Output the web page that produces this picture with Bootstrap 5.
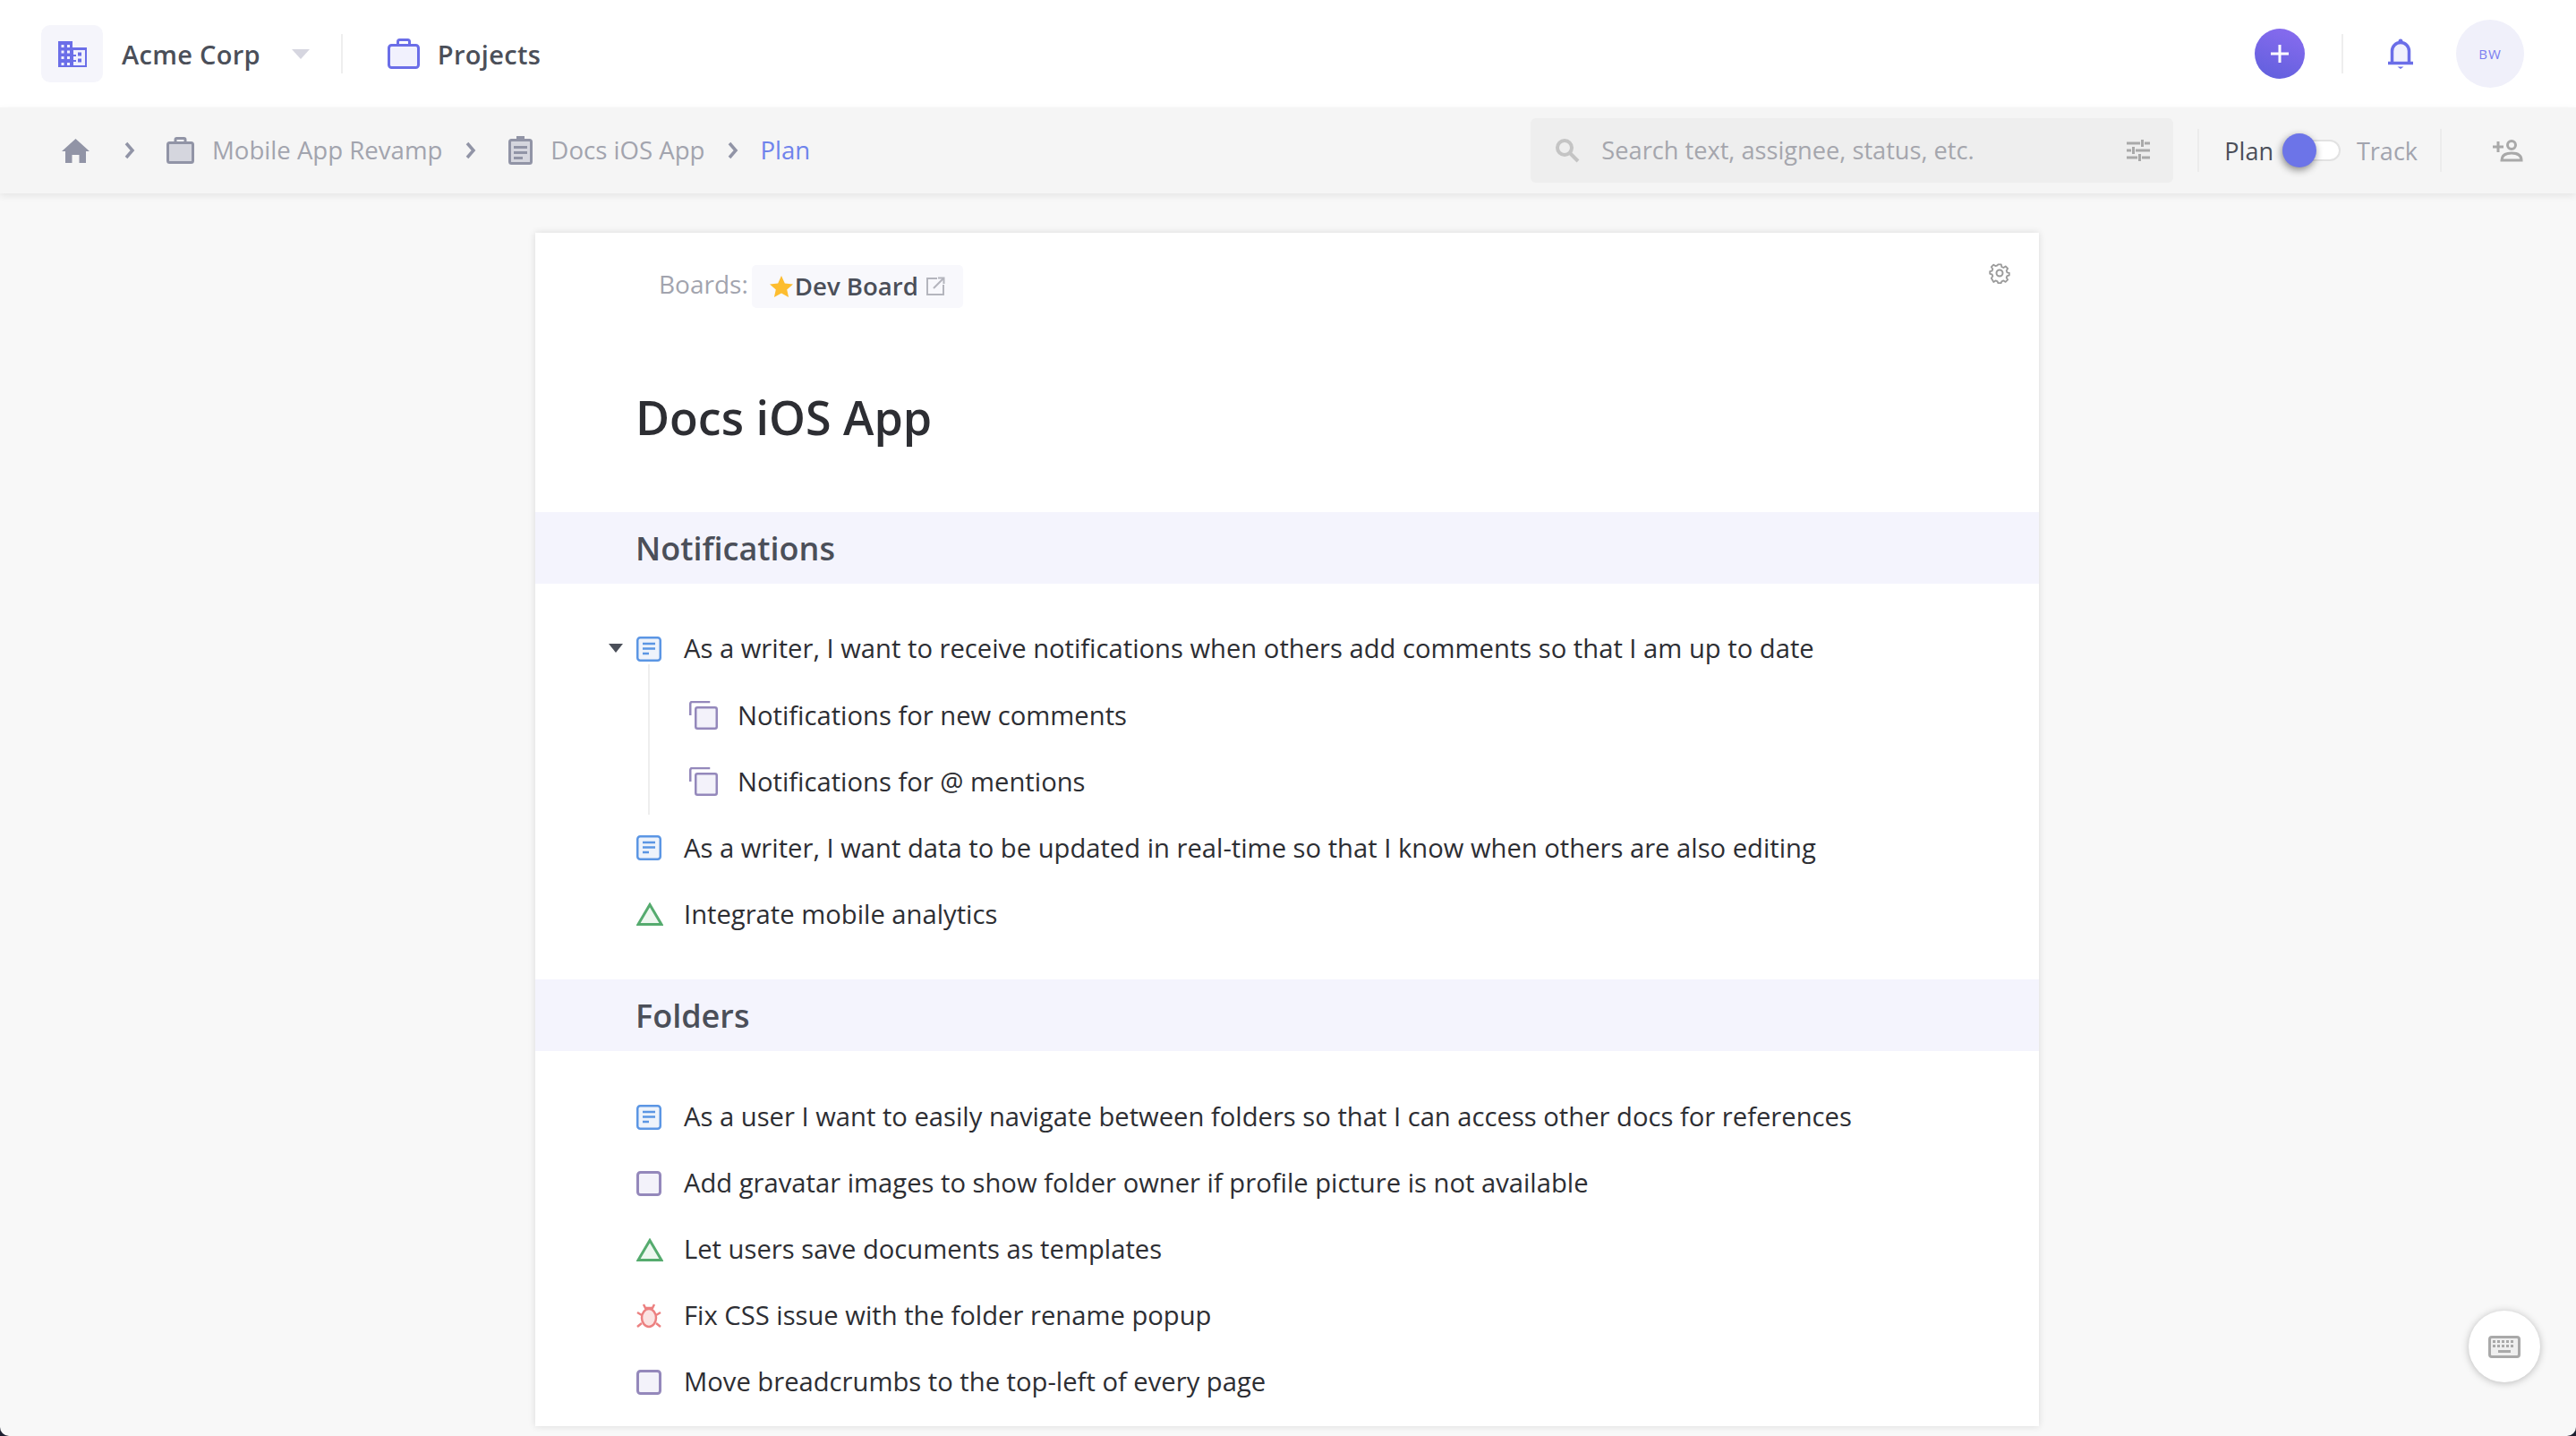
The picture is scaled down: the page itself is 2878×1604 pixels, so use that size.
<!DOCTYPE html>
<html lang="en">
<head>
    <meta charset="UTF-8">
    <meta name="viewport" content="width=device-width, initial-scale=1.0">
    <title>Docs iOS App</title>
    <link href="https://cdn.jsdelivr.net/npm/bootstrap@5.3.0/dist/css/bootstrap.min.css" rel="stylesheet">
    <style>
        html { height: 100%; background: #1d2030; }
        body { height: 100%; font-family: "Open Sans", "Noto Sans", sans-serif; background: #f8f8f8; color: #2d2e33; overflow: hidden; border-radius: 0 0 10px 10px; }

        /* top bar */
        .top-bar { height: 120px; padding-left: 46px; padding-right: 58px; background: #fff; }
        .org-logo { width: 69px; height: 64px; border-radius: 10px; background: #f5f5fb; margin-right: 21px; }
        .org-name, .top-link { font-size: 29px; font-weight: 600; color: #4b4f59; letter-spacing: .3px; line-height: 1; }
        .org-caret { width: 0; height: 0; margin-left: 35px; border-left: 10px solid transparent; border-right: 10px solid transparent; border-top: 11px solid #d6d6e0; }
        .bar-sep { width: 2px; height: 44px; background: #eeeeee; }
        .org-caret + .bar-sep { margin-left: 35px; margin-right: 50px; }
        .top-link { margin-left: 20px; }
        .add-btn { width: 56px; height: 56px; padding: 0; background: linear-gradient(20deg, #5f5fdc, #8a6cf0); border: 0; }
        .add-btn + .bar-sep { margin-left: 41px; margin-right: 49px; }
        .user-pic { width: 76px; height: 76px; margin-left: 47px; background: #f0f0fa; color: #7b7ef0; font-size: 15px; letter-spacing: 1px; }

        /* breadcrumb bar */
        .crumb-bar { height: 96px; padding-left: 69px; padding-right: 58px; background: #f5f5f5; box-shadow: 0 3px 8px rgba(0, 0, 0, .08); position: relative; }
        .crumb-text { font-size: 27.6px; color: #a2a4ae; line-height: 1; margin-left: 20px; }
        .crumb-text.now { color: #6f83ec; margin-left: 0; }
        .crumb-sep { margin: 0 36px 0 26px; flex: none; }
        .crumb-sep.first { margin-left: 39px; margin-right: 35px; }
        .crumb-sep.last { margin-right: 24px; }
        .search-box { width: 718px; height: 72px; margin-left: auto; padding: 0 26px 0 27px; border-radius: 6px; background: #eeeeee; }
        .search-input { border: 0; background: transparent; padding: 0; margin-left: 24px; font-size: 27.2px; color: #a5a6ad; box-shadow: none !important; }
        .search-input::placeholder { color: #a5a6ad; opacity: 1; }
        .crumb-rule { width: 2px; height: 48px; background: #ececec; flex: none; }
        .search-box + .crumb-rule { margin: 0 28px 0 27px; }
        .plan-label { font-size: 27px; color: #4b4f59; line-height: 1; }
        .plan-label.off { color: #a2a4ae; }
        .plan-label.off + .crumb-rule { margin: 0 56px 0 25px; }
        .plan-toggle { width: 65px; height: 24px; border-radius: 12px; background: #fff; border: 2px solid #e2e2e2; position: relative; margin: 0 18px 0 10px; }
        .plan-knob { position: absolute; left: -2px; top: -9px; width: 38px; height: 38px; border-radius: 50%; background: #6c74e8; box-shadow: -1px 3px 8px rgba(0, 0, 0, .45); }

        /* page sheet */
        .page-sheet { width: 1680px; height: 1333px; margin: 44px 0 0 598px; background: #fff; border: 0; border-radius: 0; box-shadow: 0 0 8px rgba(0, 0, 0, .12); position: relative; }
        .page-sheet > * { flex-shrink: 0; }
        .gear-btn { position: absolute; right: 32px; top: 33px; line-height: 0; }
        .boards-row { height: 48px; margin-top: 36px; padding-left: 138px; }
        .boards-label { font-size: 28px; color: #a2a4ae; margin-right: 4px; position: relative; top: -3px; }
        .board-pill { height: 48px; padding: 0 20px 0 20px; border-radius: 5px; background: #f8f8fc; color: #4b4f59; font-size: 27.6px; font-weight: 600; }
        .pill-star { margin-right: 2px; }
        .pill-link { margin-left: 8px; }
        .doc-title { margin: 86px 0 0 112px; height: 142px; font-size: 52px; font-weight: 600; line-height: 72px; color: #2d2e33; }
        .sect-band { height: 80px; padding: 2px 0 0 112px; background: #f4f4fd; font-size: 36px; font-weight: 600; color: #4b4f59; line-height: 1; }
        .item-list { padding: 36px 0; margin: 0; list-style: none; }
        .item-row { height: 74.1px; padding-left: 113px; font-size: 29.2px; position: relative; line-height: 1; }
        .item-row.sub { padding-left: 172px; }
        .item-icon { width: 32px; margin-right: 21px; flex: none; line-height: 0; }
        .sub .item-icon { width: 34px; margin-right: 20px; }
        .tree-caret { position: absolute; left: 82px; top: 31px; width: 0; height: 0; border-left: 8px solid transparent; border-right: 8px solid transparent; border-top: 10px solid #4b4f59; }
        .tree-line { position: absolute; left: 126px; top: 54px; width: 2px; height: 168px; background: #eeeeee; }

        /* keyboard shortcut button */
        .keys-btn { position: fixed; right: 40px; bottom: 60px; width: 80px; height: 80px; padding: 0; border: 0; background: #fff; box-shadow: 0 1px 8px rgba(0, 0, 0, .25); }
    </style>
</head>
<body>

<header class="top-bar d-flex align-items-center">
    <div class="org-logo d-flex align-items-center justify-content-center">
        <svg width="32" height="29" viewBox="0 0 32 29"><path fill="#6b6ee8" d="M0 0h16v7h16v22H0z"/><path fill="#f1f1fd" d="M3.500 4h3v3h-3zM10 4h3v3h-3zM3.500 10.500h3v3h-3zM10 10.500h3v3h-3zM3.500 17h3v3h-3zM10 17h3v3h-3zM3.500 24h3v3h-3zM10 24h3v3h-3zM17 10h13v17H17z"/><path fill="#6b6ee8" d="M22 12.500h4v4h-4zM22 19.500h4v4h-4zM17 15h3v2h-3zM17 21h3v2h-3z"/></svg>
    </div>
    <span class="org-name">Acme Corp</span>
    <span class="org-caret"></span>
    <span class="bar-sep"></span>
    <svg width="36" height="34" viewBox="0 0 36 34"><rect x="1.500" y="7.500" width="33" height="25" rx="3" fill="#f1f1fd" stroke="#6b6ee8" stroke-width="3"/><path fill="none" stroke="#6b6ee8" stroke-width="3" d="M11.500 7V3.500a2 2 0 0 1 2-2h9a2 2 0 0 1 2 2V7"/></svg>
    <span class="top-link">Projects</span>
    <button class="add-btn btn rounded-circle ms-auto d-flex align-items-center justify-content-center" type="button" aria-label="Add">
        <svg width="24" height="24" viewBox="0 0 24 24"><path fill="none" stroke="#fff" stroke-width="3" d="M12 2v20M2 12h20"/></svg>
    </button>
    <span class="bar-sep"></span>
    <svg width="30" height="34" viewBox="0 0 30 34"><circle cx="15" cy="3" r="2.500" fill="#6b6ee8"/><path fill="#f1f1fd" stroke="#6b6ee8" stroke-width="3.500" d="M5.500 27V14a9.500 9.500 0 0 1 19 0v13"/><path stroke="#6b6ee8" stroke-width="3.500" d="M1 27.500h28"/><path fill="#6b6ee8" d="M11.500 31.500h7L15 34z"/></svg>
    <span class="user-pic rounded-circle d-flex align-items-center justify-content-center">BW</span>
</header>

<nav class="crumb-bar d-flex align-items-center">
    <svg width="31" height="27" viewBox="0 0 31 27"><path fill="#9194a6" d="M15.500 0L31 14h-4v13h-7.500v-9h-8v9H4V14H0z"/></svg>
    <svg class="crumb-sep first" width="12" height="20" viewBox="0 0 12 20"><path fill="none" stroke="#9194a6" stroke-width="3.500" d="M2 2l7 8-7 8"/></svg>
    <svg width="31" height="30" viewBox="0 0 31 30"><rect x="1.500" y="6.500" width="28" height="22" rx="2" fill="#d5d6de" stroke="#9194a6" stroke-width="3"/><path fill="none" stroke="#9194a6" stroke-width="3" d="M10 6V3a1.500 1.500 0 0 1 1.500-1.500h8A1.500 1.500 0 0 1 21 3v3"/></svg>
    <span class="crumb-text">Mobile App Revamp</span>
    <svg class="crumb-sep" width="12" height="20" viewBox="0 0 12 20"><path fill="none" stroke="#9194a6" stroke-width="3.500" d="M2 2l7 8-7 8"/></svg>
    <svg width="27" height="32" viewBox="0 0 27 32"><rect x="1.500" y="4.500" width="24" height="26" rx="2" fill="#d5d6de" stroke="#9194a6" stroke-width="3"/><path fill="#9194a6" d="M9 0h9v6H9zM6 11h15v3H6zM6 17h15v3H6zM6 23h10v3H6z"/></svg>
    <span class="crumb-text">Docs iOS App</span>
    <svg class="crumb-sep last" width="12" height="20" viewBox="0 0 12 20"><path fill="none" stroke="#9194a6" stroke-width="3.500" d="M2 2l7 8-7 8"/></svg>
    <span class="crumb-text now">Plan</span>

    <div class="search-box d-flex align-items-center">
        <svg class="flex-shrink-0" width="28" height="28" viewBox="0 0 28 28"><circle cx="11" cy="11" r="8" fill="none" stroke="#c4c4c4" stroke-width="4"/><path stroke="#c4c4c4" stroke-width="4" d="M17 17l9 9"/></svg>
        <input class="search-input form-control" type="text" placeholder="Search text, assignee, status, etc.">
        <svg class="flex-shrink-0" width="26" height="24" viewBox="0 0 26 24"><path fill="none" stroke="#a9a9a9" stroke-width="3" d="M0 4h15M20 4h6M17.500 0v8M0 12h5M10 12h16M7.500 8v8M0 20h12M17 20h9M14.500 16v8"/></svg>
    </div>
    <span class="crumb-rule"></span>
    <span class="plan-label">Plan</span>
    <span class="plan-toggle"><span class="plan-knob"></span></span>
    <span class="plan-label off">Track</span>
    <span class="crumb-rule"></span>
    <svg width="36" height="26" viewBox="0 0 36 26"><circle cx="22" cy="7" r="4.500" fill="none" stroke="#a9a9a9" stroke-width="3"/><path fill="none" stroke="#a9a9a9" stroke-width="3" d="M11 24c0-6 5-8 11-8s11 2 11 8z"/><path stroke="#a9a9a9" stroke-width="3" d="M7 3v12M1 9h12"/></svg>
</nav>

<main class="page-sheet card">
    <svg class="gear-btn" width="24" height="24" viewBox="0 0 24 24"><g fill="none" stroke="#9b9b9b" stroke-width="2"><circle cx="12" cy="12" r="3.500"/><path stroke-linejoin="round" d="M10 2h4l.6 3 2.300 1 2.500-1.700 2.800 2.800-1.700 2.500.9 2.300 2.600.6v3l-2.600.6-.9 2.300 1.700 2.500-2.800 2.800-2.500-1.700-2.300 1-.6 2h-4l-.6-2-2.300-1-2.500 1.700L1.800 19l1.700-2.500-.9-2.300L0 13.600v-3l2.600-.6.9-2.300L1.800 5.100 4.600 2.300l2.500 1.700 2.300-1z" transform="translate(1.200 .6) scale(.9)"/></g></svg>
    <div class="boards-row d-flex align-items-center">
        <span class="boards-label">Boards:</span>
        <span class="board-pill d-inline-flex align-items-center">
            <svg class="pill-star" width="26" height="24" viewBox="0 0 26 24"><path fill="#fdbd2f" d="M13 0l3.800 8.400 9.200 1-6.800 6.200 1.900 8.400L13 19.600 4.900 24l1.900-8.400L0 9.400l9.200-1z"/></svg>
            Dev Board
            <svg class="pill-link" width="22" height="22" viewBox="0 0 22 22"><path fill="none" stroke="#b4b5bd" stroke-width="2" d="M13 2H2v18h18V9M9 13L20 2M14 1.500h6.500V8"/></svg>
        </span>
    </div>
    <h1 class="doc-title">Docs iOS App</h1>

    <div class="sect-band d-flex align-items-center">Notifications</div>
    <ul class="item-list">
        <li class="item-row d-flex align-items-center">
            <span class="tree-caret"></span>
            <span class="tree-line"></span>
            <span class="item-icon"><svg width="28" height="28" viewBox="0 0 28 28"><rect x="1.250" y="1.250" width="25.500" height="25.500" rx="3" fill="#eef3fb" stroke="#5b96e4" stroke-width="2.500"/><path stroke="#5b96e4" stroke-width="2.500" d="M7 8h14M7 13.500h14M7 19h7"/></svg></span>
            As a writer, I want to receive notifications when others add comments so that I am up to date
        </li>
        <li class="item-row sub d-flex align-items-center">
            <span class="item-icon"><svg width="32" height="32" viewBox="0 0 32 32"><path fill="none" stroke="#9488bb" stroke-width="2.500" d="M1.250 16V3a2 2 0 0 1 2-2h20"/><rect x="7.250" y="7.250" width="23.500" height="23.500" rx="2" fill="#f3f2fa" stroke="#9488bb" stroke-width="2.500"/></svg></span>
            Notifications for new comments
        </li>
        <li class="item-row sub d-flex align-items-center">
            <span class="item-icon"><svg width="32" height="32" viewBox="0 0 32 32"><path fill="none" stroke="#9488bb" stroke-width="2.500" d="M1.250 16V3a2 2 0 0 1 2-2h20"/><rect x="7.250" y="7.250" width="23.500" height="23.500" rx="2" fill="#f3f2fa" stroke="#9488bb" stroke-width="2.500"/></svg></span>
            Notifications for @ mentions
        </li>
        <li class="item-row d-flex align-items-center">
            <span class="item-icon"><svg width="28" height="28" viewBox="0 0 28 28"><rect x="1.250" y="1.250" width="25.500" height="25.500" rx="3" fill="#eef3fb" stroke="#5b96e4" stroke-width="2.500"/><path stroke="#5b96e4" stroke-width="2.500" d="M7 8h14M7 13.500h14M7 19h7"/></svg></span>
            As a writer, I want data to be updated in real-time so that I know when others are also editing
        </li>
        <li class="item-row d-flex align-items-center">
            <span class="item-icon"><svg width="30" height="26" viewBox="0 0 30 26"><path fill="#eef7f0" stroke="#55ab6e" stroke-width="3" d="M15 2.500L2 24.500h26z"/></svg></span>
            Integrate mobile analytics
        </li>
    </ul>

    <div class="sect-band d-flex align-items-center">Folders</div>
    <ul class="item-list">
        <li class="item-row d-flex align-items-center">
            <span class="item-icon"><svg width="28" height="28" viewBox="0 0 28 28"><rect x="1.250" y="1.250" width="25.500" height="25.500" rx="3" fill="#eef3fb" stroke="#5b96e4" stroke-width="2.500"/><path stroke="#5b96e4" stroke-width="2.500" d="M7 8h14M7 13.500h14M7 19h7"/></svg></span>
            As a user I want to easily navigate between folders so that I can access other docs for references
        </li>
        <li class="item-row d-flex align-items-center">
            <span class="item-icon"><svg width="28" height="28" viewBox="0 0 28 28"><rect x="1.500" y="1.500" width="25" height="25" rx="3" fill="#f3f2fa" stroke="#9488bb" stroke-width="3"/></svg></span>
            Add gravatar images to show folder owner if profile picture is not available
        </li>
        <li class="item-row d-flex align-items-center">
            <span class="item-icon"><svg width="30" height="26" viewBox="0 0 30 26"><path fill="#eef7f0" stroke="#55ab6e" stroke-width="3" d="M15 2.500L2 24.500h26z"/></svg></span>
            Let users save documents as templates
        </li>
        <li class="item-row d-flex align-items-center">
            <span class="item-icon"><svg width="28" height="28" viewBox="0 0 28 28"><g fill="#fbe3e2" stroke="#ec8080" stroke-width="2.500"><path fill="none" d="M8 1l2 4h8l2-4M1 10l5 3M27 10l-5 3M1 26l5-4M27 26l-5-4"/><ellipse cx="14" cy="16" rx="8" ry="10"/></g></svg></span>
            Fix CSS issue with the folder rename popup
        </li>
        <li class="item-row d-flex align-items-center">
            <span class="item-icon"><svg width="28" height="28" viewBox="0 0 28 28"><rect x="1.500" y="1.500" width="25" height="25" rx="3" fill="#f3f2fa" stroke="#9488bb" stroke-width="3"/></svg></span>
            Move breadcrumbs to the top-left of every page
        </li>
    </ul>
</main>

<button class="keys-btn btn rounded-circle d-flex align-items-center justify-content-center" type="button" aria-label="Keyboard shortcuts">
    <svg width="36" height="25" viewBox="0 0 36 25"><rect x="1.500" y="1.500" width="33" height="22" rx="2.500" fill="#efefef" stroke="#a9a9a9" stroke-width="3"/><path fill="#a9a9a9" d="M5 5h3v3H5zM10 5h3v3h-3zM15 5h3v3h-3zM20 5h3v3h-3zM25 5h3v3h-3zM5 10h3v3H5zM10 10h3v3h-3zM15 10h3v3h-3zM20 10h3v3h-3zM25 10h3v3h-3zM11 16h14v3H11z"/></svg>
</button>

</body>
</html>
